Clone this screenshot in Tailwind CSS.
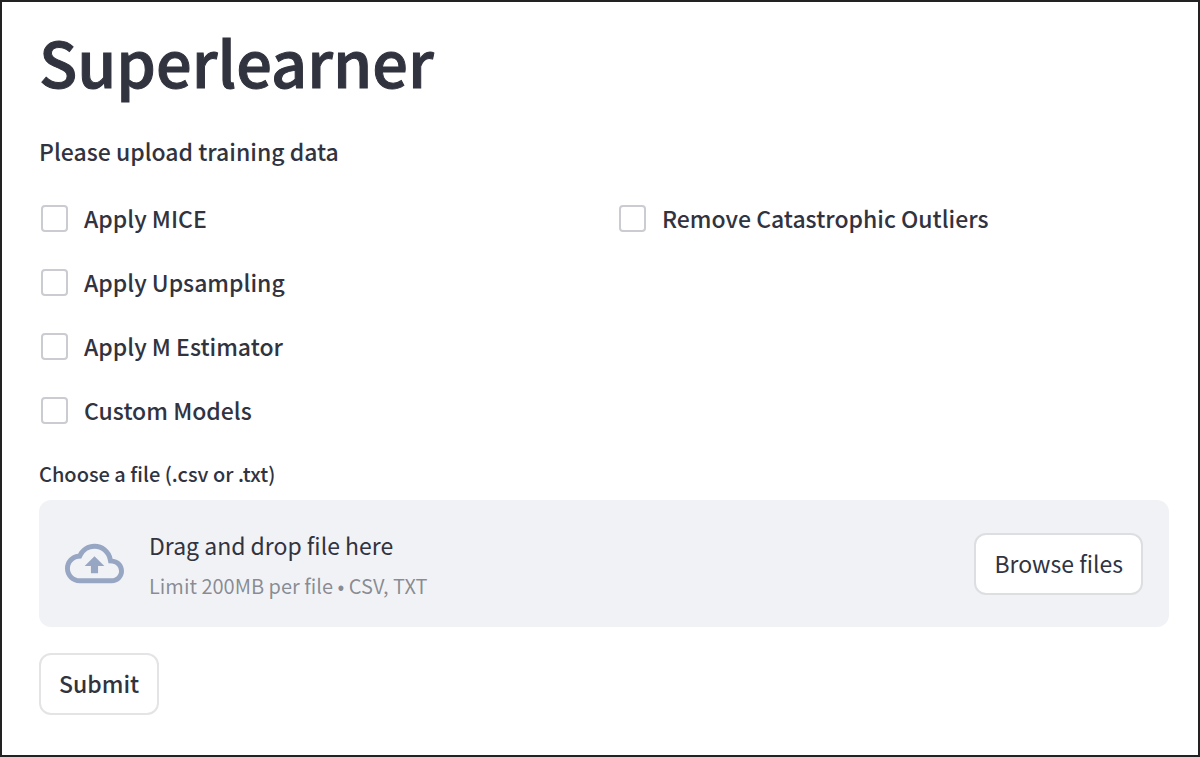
<!DOCTYPE html>
<html lang="en">
<head>
  <meta charset="UTF-8" />
  <meta name="viewport" content="width=device-width, initial-scale=1.0"/>
  <title>Superlearner</title>
  <script src="https://cdn.jsdelivr.net/npm/@tailwindcss/browser@4"></script>
</head>
<body class="min-h-screen border-2 border-[#222222] bg-white pt-[23px] pl-[37px] pr-[29px] pb-10 font-['Noto_Sans_CJK_JP','Noto_Sans',sans-serif] text-[#31333f]">

  <h1 class="text-[63px] leading-[72px] font-medium [-webkit-text-stroke:1px_#31333f]">Superlearner</h1>

  <form>
    <p class="mt-[34px] text-[23px] leading-10 font-medium">Please upload training data</p>

    <!-- Options -->
    <div class="mt-[27px] grid grid-cols-2 gap-x-[26px]">
      <div class="flex flex-col gap-6 pl-[2px]">
        <label class="flex items-center gap-4 text-[23px] leading-10 font-medium">
          <input type="checkbox" name="mice" class="size-[27px] appearance-none rounded-[4px] border-2 border-[#cbccd1] bg-white checked:bg-[#ff4b4b]"/>
          Apply MICE
        </label>
        <label class="flex items-center gap-4 text-[23px] leading-10 font-medium">
          <input type="checkbox" name="upsampling" class="size-[27px] appearance-none rounded-[4px] border-2 border-[#cbccd1] bg-white checked:bg-[#ff4b4b]"/>
          Apply Upsampling
        </label>
        <label class="flex items-center gap-4 text-[23px] leading-10 font-medium">
          <input type="checkbox" name="m_estimator" class="size-[27px] appearance-none rounded-[4px] border-2 border-[#cbccd1] bg-white checked:bg-[#ff4b4b]"/>
          Apply M Estimator
        </label>
        <label class="flex items-center gap-4 text-[23px] leading-10 font-medium">
          <input type="checkbox" name="custom_models" class="size-[27px] appearance-none rounded-[4px] border-2 border-[#cbccd1] bg-white checked:bg-[#ff4b4b]"/>
          Custom Models
        </label>
      </div>
      <div class="flex flex-col gap-6 pl-[2px]">
        <label class="flex items-center gap-4 text-[23px] leading-10 font-medium">
          <input type="checkbox" name="outliers" class="size-[27px] appearance-none rounded-[4px] border-2 border-[#cbccd1] bg-white checked:bg-[#ff4b4b]"/>
          Remove Catastrophic Outliers
        </label>
      </div>
    </div>

    <!-- File upload -->
    <label for="browse" class="mt-7 block text-xl leading-8 font-medium">Choose a file (.csv or .txt)</label>
    <section class="mt-[10px] flex items-center rounded-xl bg-[#f0f2f6] px-[26px] py-[21px]">
      <svg class="mr-[25px] size-[59px] shrink-0" viewBox="0 0 24 24" fill="#97a6c3" aria-hidden="true">
        <path d="M19.35 10.04A7.49 7.49 0 0 0 12 4C9.11 4 6.6 5.64 5.35 8.04A5.994 5.994 0 0 0 0 14c0 3.31 2.69 6 6 6h13c2.76 0 5-2.24 5-5 0-2.64-2.05-4.78-4.65-4.96zM19 18H6c-2.21 0-4-1.79-4-4 0-2.05 1.53-3.76 3.56-3.97l1.07-.11.5-.95A5.469 5.469 0 0 1 12 6c2.62 0 4.88 1.86 5.39 4.43l.3 1.5 1.53.11A2.98 2.98 0 0 1 22 15c0 1.65-1.35 3-3 3zM8 13h2.550v3h2.900v-3H16l-4-4z"/>
      </svg>
      <div class="flex flex-1 flex-col gap-px pt-1">
        <span class="text-[23px] leading-10">Drag and drop file here</span>
        <small class="text-xl leading-10 text-[#31333f]/55">Limit 200MB per file • CSV, TXT</small>
      </div>
      <button id="browse" type="button" class="h-[62px] rounded-xl border-2 border-[#dddee1] bg-white px-[18px] pb-px text-[23px] hover:border-[#ff4b4b] hover:text-[#ff4b4b]">Browse files</button>
    </section>

    <button type="submit" class="mt-[26px] h-[62px] rounded-xl border-2 border-[#e4e4e7] bg-white px-[18px] pb-px text-[23px] font-medium hover:border-[#ff4b4b] hover:text-[#ff4b4b]">Submit</button>
  </form>

</body>
</html>
